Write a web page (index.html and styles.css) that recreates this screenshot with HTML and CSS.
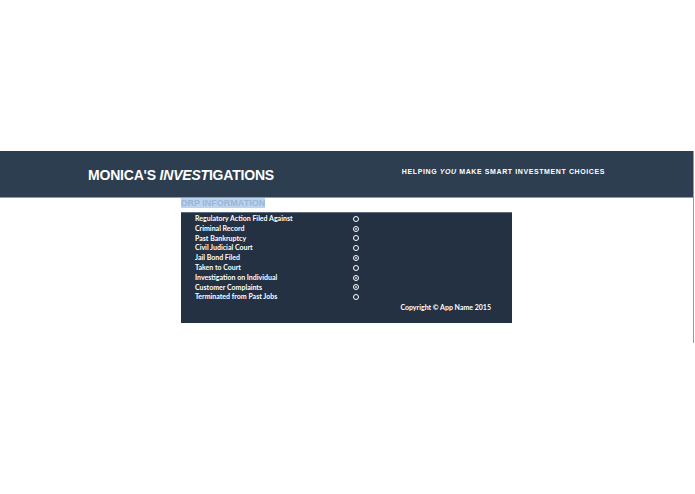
FILE: index.html
```html
<!DOCTYPE html>
<html lang="en">
  <head>
    <meta charset="UTF-8" />
    <meta name="viewport" content="width=device-width, initial-scale=1.0" />
    <title>Monica's Investigations</title>
    <link rel="stylesheet" href="styles.css">
  </head>
  <body>
    <div class="page">
      <div class="header">
        <div class="header-inner">
          <div class="brand">MONICA'S <em>INVEST</em>IGATIONS</div>
          <div class="tagline">HELPING <em>YOU</em> MAKE SMART INVESTMENT CHOICES</div>
        </div>
      </div>

      <div class="content">
        <div class="section-title"><span>DRP INFORMATION</span></div>
        <div class="panel">
          <div class="rows">
            <div class="label">Regulatory Action Filed Against</div><span class="radio"></span>
            <div class="label">Criminal Record</div><span class="radio checked"></span>
            <div class="label">Past Bankruptcy</div><span class="radio"></span>
            <div class="label">Civil Judicial Court</div><span class="radio"></span>
            <div class="label">Jail Bond Filed</div><span class="radio checked"></span>
            <div class="label">Taken to Court</div><span class="radio"></span>
            <div class="label">Investigation on Individual</div><span class="radio checked"></span>
            <div class="label">Customer Complaints</div><span class="radio checked"></span>
            <div class="label">Terminated from Past Jobs</div><span class="radio"></span>
          </div>
          <div class="copyright">Copyright &copy; App Name 2015</div>
        </div>
      </div>
    </div>
  </body>
</html>
```

FILE: styles.css
```css
body {
  margin: 0;
  background-color: #fff;
  font-family: "Liberation Sans", Arial, sans-serif;
}
.page {
  margin-top: 151px;
  margin-right: 1px;
  height: 192px;
  border-right: 1px solid #9a9a9a;
}
.header {
  height: 46px;
  background-color: #2c3e50;
  border-bottom: 1px solid #8c9cb0;
}
.header-inner {
  width: 517px;
  margin: 0 auto;
  display: flex;
  justify-content: space-between;
  color: #fff;
  font-weight: bold;
}
.brand {
  font-size: 14px;
  letter-spacing: -0.2px;
  padding-top: 16px;
}
.tagline {
  font-size: 7px;
  letter-spacing: 0.6px;
  padding-top: 17px;
}
.content {
  width: 331px;
  margin: 0 auto;
}
.section-title {
  height: 14px;
  font-size: 9px;
  font-weight: bold;
  line-height: 11px;
}
.section-title span {
  background-color: #bcd3ee;
  color: #9ab5d6;
}
.panel {
  background-color: #243142;
  border-top: 1px solid #5e6c7e;
  padding: 1px 21px 10px 14px;
  color: #fff;
  font-family: Lato, "Liberation Sans", sans-serif;
  font-weight: bold;
  font-size: 7px;
}
.rows {
  display: grid;
  grid-template-columns: 158px 6px;
  align-items: center;
  line-height: 9.8px;
}
.radio {
  width: 4px;
  height: 4px;
  border: 1px solid #fff;
  border-radius: 50%;
  position: relative;
}
.radio.checked::after {
  content: "";
  position: absolute;
  left: 1px;
  top: 1px;
  width: 2px;
  height: 2px;
  border-radius: 50%;
  background-color: #c8c8c8;
}
.copyright {
  text-align: right;
  margin-top: 1px;
  line-height: 9.8px;
}
```
